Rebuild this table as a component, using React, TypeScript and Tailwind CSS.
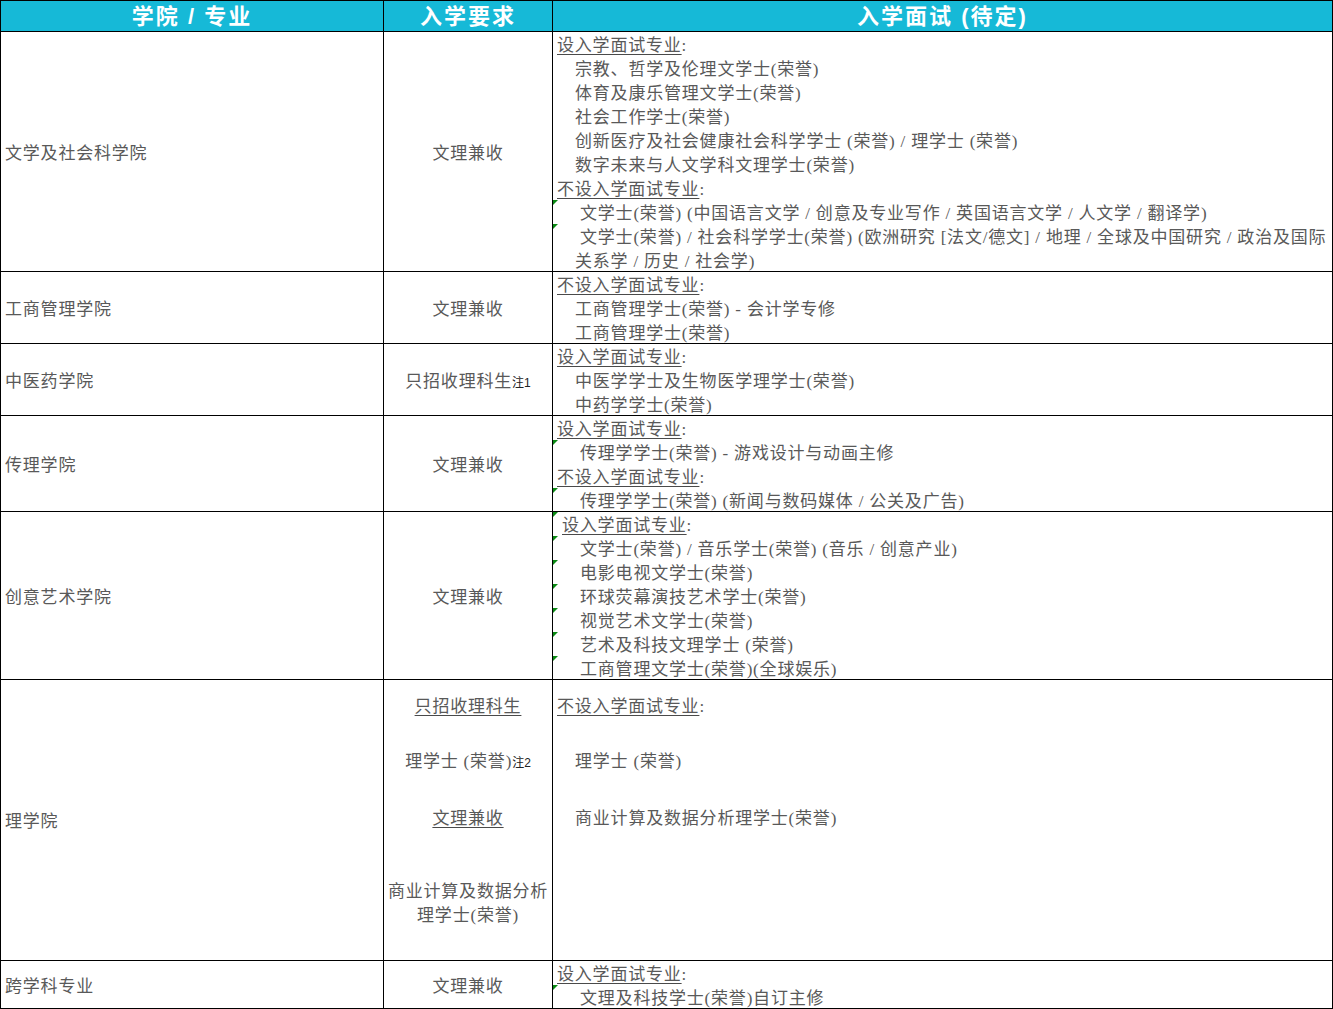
import type { ReactNode } from "react";

const body = "font-['Liberation_Serif','Noto_Sans_CJK_SC',serif] text-[17px] tracking-[0.8px] text-[#595959]";

// little green corner mark the spreadsheet puts on some cells
const Mark = () => (
    <svg className="absolute left-0 top-0" width="5" height="5" viewBox="0 0 5 5">
        <polygon points="0,0 5,0 0,5" fill="#0b8a14" />
    </svg>
);

const Line = ({
    children,
    pad,
    mark,
}: {
    children: ReactNode;
    pad: string;
    mark?: boolean;
}) => (
    <div className={`relative h-6 leading-6 whitespace-nowrap ${pad}`}>
        {mark && <Mark />}
        <span className="relative top-[2px]">{children}</span>
    </div>
);

const Heading = ({ text, pad = "pl-1", mark }: { text: string; pad?: string; mark?: boolean }) => (
    <Line pad={pad} mark={mark}>
        <span className="underline decoration-[#4a4a4a] underline-offset-[3px]">{text}</span>:
    </Line>
);

const Item = ({ text, deep, mark }: { text: string; deep?: boolean; mark?: boolean }) => (
    <Line pad={deep ? "pl-[27px]" : "pl-[22px]"} mark={mark}>
        {text}
    </Line>
);

const Note = ({ n }: { n: string }) => (
    <span className="text-[12px] tracking-normal text-[#222] font-['Liberation_Sans','Noto_Sans_CJK_SC',sans-serif]">
        注{n}
    </span>
);

const School = ({ name }: { name: string }) => (
    <div className="bg-white flex items-center pl-1 pt-1 overflow-hidden">{name}</div>
);

const Req = ({ children }: { children: ReactNode }) => (
    <div className="bg-white flex items-center justify-center text-center pt-1 overflow-hidden">{children}</div>
);

const Interview = ({ children }: { children: ReactNode }) => (
    <div className="bg-white overflow-hidden">{children}</div>
);

const head =
    "bg-[#16b9d7] flex items-center justify-center text-white font-bold text-[22px] tracking-[2px] font-['Liberation_Sans','Noto_Sans_CJK_SC',sans-serif]";

const App = () => {
    return (
        <div className="w-[1333px] h-[1009px] bg-white">
            <div
                className={`grid grid-cols-[382px_168px_779px] grid-rows-[30px_239px_71px_71px_95px_167px_280px_47px] gap-px bg-black p-px ${body}`}
            >
                {/* header */}
                <div className={head}>学院 / 专业</div>
                <div className={head}>入学要求</div>
                <div className={head}>入学面试 (待定)</div>

                {/* 文学及社会科学院 */}
                <School name="文学及社会科学院" />
                <Req>文理兼收</Req>
                <Interview>
                    <Heading text="设入学面试专业" />
                    <Item text="宗教、哲学及伦理文学士(荣誉)" />
                    <Item text="体育及康乐管理文学士(荣誉)" />
                    <Item text="社会工作学士(荣誉)" />
                    <Item text="创新医疗及社会健康社会科学学士 (荣誉) / 理学士 (荣誉)" />
                    <Item text="数字未来与人文学科文理学士(荣誉)" />
                    <Heading text="不设入学面试专业" />
                    <Item deep mark text="文学士(荣誉) (中国语言文学 / 创意及专业写作 / 英国语言文学 / 人文学 / 翻译学)" />
                    <Item deep mark text="文学士(荣誉) / 社会科学学士(荣誉) (欧洲研究 [法文/德文] / 地理 / 全球及中国研究 / 政治及国际" />
                    <Item text="关系学 / 历史 / 社会学)" />
                </Interview>

                {/* 工商管理学院 */}
                <School name="工商管理学院" />
                <Req>文理兼收</Req>
                <Interview>
                    <Heading text="不设入学面试专业" />
                    <Item text="工商管理学士(荣誉) - 会计学专修" />
                    <Item text="工商管理学士(荣誉)" />
                </Interview>

                {/* 中医药学院 */}
                <School name="中医药学院" />
                <Req>
                    <span>
                        只招收理科生
                        <Note n="1" />
                    </span>
                </Req>
                <Interview>
                    <Heading text="设入学面试专业" />
                    <Item text="中医学学士及生物医学理学士(荣誉)" />
                    <Item text="中药学学士(荣誉)" />
                </Interview>

                {/* 传理学院 */}
                <School name="传理学院" />
                <Req>文理兼收</Req>
                <Interview>
                    <Heading text="设入学面试专业" />
                    <Item deep mark text="传理学学士(荣誉) - 游戏设计与动画主修" />
                    <Heading text="不设入学面试专业" />
                    <Item deep mark text="传理学学士(荣誉) (新闻与数码媒体 / 公关及广告)" />
                </Interview>

                {/* 创意艺术学院 */}
                <School name="创意艺术学院" />
                <Req>文理兼收</Req>
                <Interview>
                    <Heading text="设入学面试专业" pad="pl-[9px]" mark />
                    <Item deep mark text="文学士(荣誉) / 音乐学士(荣誉) (音乐 / 创意产业)" />
                    <Item deep mark text="电影电视文学士(荣誉)" />
                    <Item deep mark text="环球荧幕演技艺术学士(荣誉)" />
                    <Item deep mark text="视觉艺术文学士(荣誉)" />
                    <Item deep mark text="艺术及科技文理学士 (荣誉)" />
                    <Item deep mark text="工商管理文学士(荣誉)(全球娱乐)" />
                </Interview>

                {/* 理学院 */}
                <School name="理学院" />
                <div className="bg-white flex flex-col text-center overflow-hidden">
                    <div className="h-[49px] flex items-center justify-center pt-1">
                        <span className="underline decoration-[#4a4a4a] underline-offset-[3px]">只招收理科生</span>
                    </div>
                    <div className="h-[62px] flex items-center justify-center pt-1">
                        <span>
                            理学士 (荣誉)
                            <Note n="2" />
                        </span>
                    </div>
                    <div className="h-[52px] flex items-center justify-center pt-1">
                        <span className="underline decoration-[#4a4a4a] underline-offset-[3px]">文理兼收</span>
                    </div>
                    <div className="flex-1 flex flex-col items-center justify-center leading-6 pt-1">
                        <div>商业计算及数据分析</div>
                        <div>理学士(荣誉)</div>
                    </div>
                </div>
                <div className="bg-white flex flex-col overflow-hidden">
                    <div className="h-[49px] flex items-center">
                        <Heading text="不设入学面试专业" />
                    </div>
                    <div className="h-[62px] flex items-center">
                        <Item text="理学士 (荣誉)" />
                    </div>
                    <div className="h-[52px] flex items-center">
                        <Item text="商业计算及数据分析理学士(荣誉)" />
                    </div>
                </div>

                {/* 跨学科专业 */}
                <School name="跨学科专业" />
                <Req>文理兼收</Req>
                <Interview>
                    <Heading text="设入学面试专业" />
                    <Item deep mark text="文理及科技学士(荣誉)自订主修" />
                </Interview>
            </div>
        </div>
    );
};

export default App;
